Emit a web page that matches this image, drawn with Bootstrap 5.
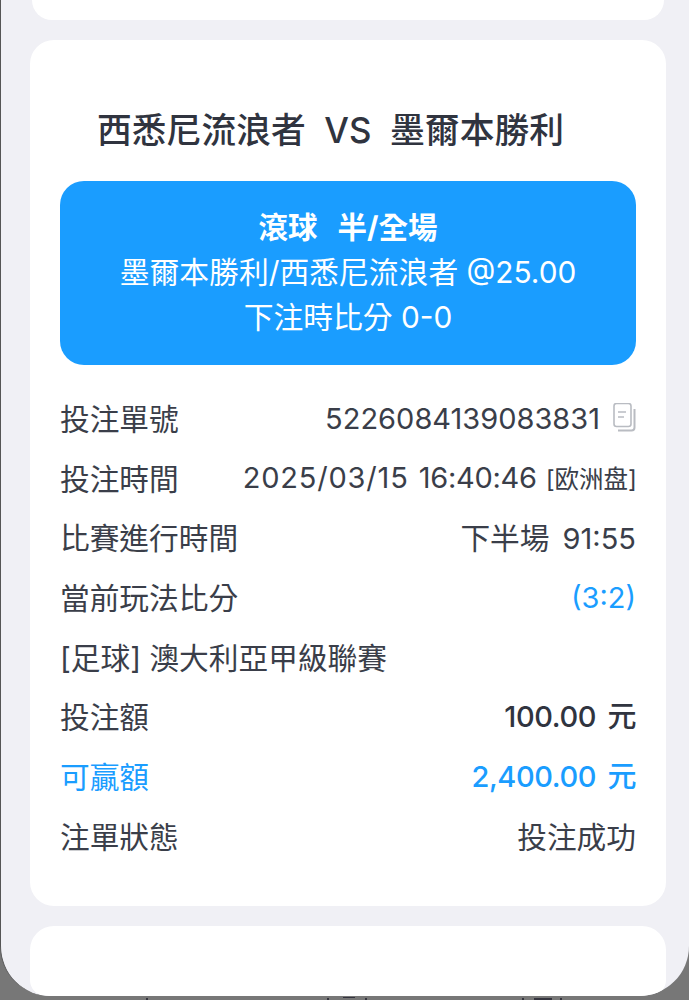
<!DOCTYPE html>
<html lang="zh-Hant">
<head>
    <meta charset="UTF-8">
    <meta name="viewport" content="width=device-width, initial-scale=1.0">
    <title>注單詳情</title>
    <link href="https://cdn.jsdelivr.net/npm/bootstrap@5.3.0/dist/css/bootstrap.min.css" rel="stylesheet">
    <style>
        html, body {
            height: 1000px;
            overflow: hidden;
            background-color: #777;
        }
        body {
            font-family: Inter, "Noto Sans CJK TC", sans-serif;
            color: #30343f;
        }
        .sheet {
            height: 996px;
            padding: 0 23px 0 29px;
            background-color: #f0f0f5;
            border-left: 1px solid #555;
            border-radius: 0 0 50px 50px;
            overflow: hidden;
        }
        .peek-strip {
            display: block;
            width: 689px;
            height: 4px;
        }
        .bet-card {
            background-color: #fff;
            border-radius: 24px;
        }
        .bet-card-top {
            height: 20px;
            margin: 0 2px 20px 2px;
            border-radius: 0 0 20px 20px;
        }
        .bet-card-main {
            height: 866px;
            padding: 0 30px;
            margin-bottom: 20px;
        }
        .bet-card-next {
            height: 70px;
            border-radius: 24px 24px 16px 16px;
        }
        .bet-title {
            height: 141px;
            padding: 70px 0 0 37px;
            font-size: 34.8px;
            line-height: 40px;
            font-weight: 500;
            white-space: pre;
        }
        .bet-banner {
            height: 184px;
            padding-top: 24px;
            margin-bottom: 24px;
            background-color: #1a9dff;
            border-radius: 24px;
            color: #fff;
            font-size: 29.8px;
            line-height: 45px;
            text-align: center;
        }
        .bet-banner-head {
            font-weight: 700;
            font-size: 29.5px;
            word-spacing: 13px;
        }
        .bet-row {
            height: 59.7px;
            font-size: 29.7px;
            line-height: 40px;
            color: #3a3e49;
        }
        .bet-row-win {
            color: #1a9dff;
        }
        .bet-value {
            font-size: 29px;
        }
        .bet-cjk {
            font-size: 29.7px;
            margin-right: 5px;
        }
        .bet-blue {
            color: #1a9dff;
        }
        .bet-amount {
            font-weight: 500;
            letter-spacing: -0.4px;
            word-spacing: 4px;
        }
        .bet-dark {
            color: #30343f;
        }
        .bet-date {
            letter-spacing: 0.8px;
            margin-right: 2px;
        }
        .bet-time {
            letter-spacing: -0.3px;
        }
        .bet-tag {
            font-size: 24.5px;
            margin-left: 9px;
            margin-right: -1px;
        }
        .copy-icon {
            width: 23px;
            height: 32px;
            margin-left: 13px;
        }
    </style>
</head>
<body>
    <div class="sheet">
        <div class="bet-card bet-card-top"></div>
        <div class="bet-card bet-card-main">
            <div class="bet-title">西悉尼流浪者  VS  墨爾本勝利</div>
            <div class="bet-banner">
                <div class="bet-banner-head">滾球 半/全場</div>
                <div>墨爾本勝利/西悉尼流浪者 @25.00</div>
                <div>下注時比分 0-0</div>
            </div>
            <div class="bet-row d-flex justify-content-between align-items-center">
                <span>投注單號</span>
                <span class="bet-value d-flex align-items-center">5226084139083831<svg class="copy-icon" viewBox="0 0 23 32" fill="none" stroke="#b9bcc2" stroke-width="1.6">
                        <rect x="1" y="0.5" width="17" height="23" rx="2.5"/>
                        <path d="M5 9h8M5 14h6"/>
                        <path d="M21.5 6v18.5a3 3 0 0 1-3 3H5" stroke-width="2"/>
                    </svg></span>
            </div>
            <div class="bet-row d-flex justify-content-between align-items-center">
                <span class="text-nowrap">投注時間</span>
                <span class="bet-value text-nowrap"><span class="bet-date">2025/03/15</span> <span class="bet-time">16:40:46</span><span class="bet-tag">[欧洲盘]</span></span>
            </div>
            <div class="bet-row d-flex justify-content-between align-items-center">
                <span>比賽進行時間</span>
                <span class="bet-value"><span class="bet-cjk">下半場</span> 91:55</span>
            </div>
            <div class="bet-row d-flex justify-content-between align-items-center">
                <span>當前玩法比分</span>
                <span class="bet-value bet-blue">(3:2)</span>
            </div>
            <div class="bet-row d-flex justify-content-between align-items-center">
                <span>[足球] 澳大利亞甲級聯賽</span>
            </div>
            <div class="bet-row d-flex justify-content-between align-items-center">
                <span>投注額</span>
                <span class="bet-value bet-amount bet-dark">100.00 元</span>
            </div>
            <div class="bet-row bet-row-win d-flex justify-content-between align-items-center">
                <span>可贏額</span>
                <span class="bet-value bet-amount">2,400.00 元</span>
            </div>
            <div class="bet-row d-flex justify-content-between align-items-center">
                <span>注單狀態</span>
                <span>投注成功</span>
            </div>
        </div>
        <div class="bet-card bet-card-next"></div>
    </div>
    <!-- tops of the page text behind the sheet -->
    <svg class="peek-strip" viewBox="0 0 689 4" fill="#34343e">
        <rect x="146" y="2" width="2" height="2"/>
        <rect x="327" y="2" width="2" height="2"/>
        <rect x="343" y="1" width="12" height="1"/>
        <rect x="365" y="2" width="2" height="2"/>
        <rect x="522" y="2" width="2" height="2"/>
        <rect x="534" y="2" width="18" height="2"/>
        <rect x="560" y="2" width="2" height="2"/>
    </svg>
    <script src="https://cdn.jsdelivr.net/npm/bootstrap@5.3.0/dist/js/bootstrap.bundle.min.js"></script>
</body>
</html>
